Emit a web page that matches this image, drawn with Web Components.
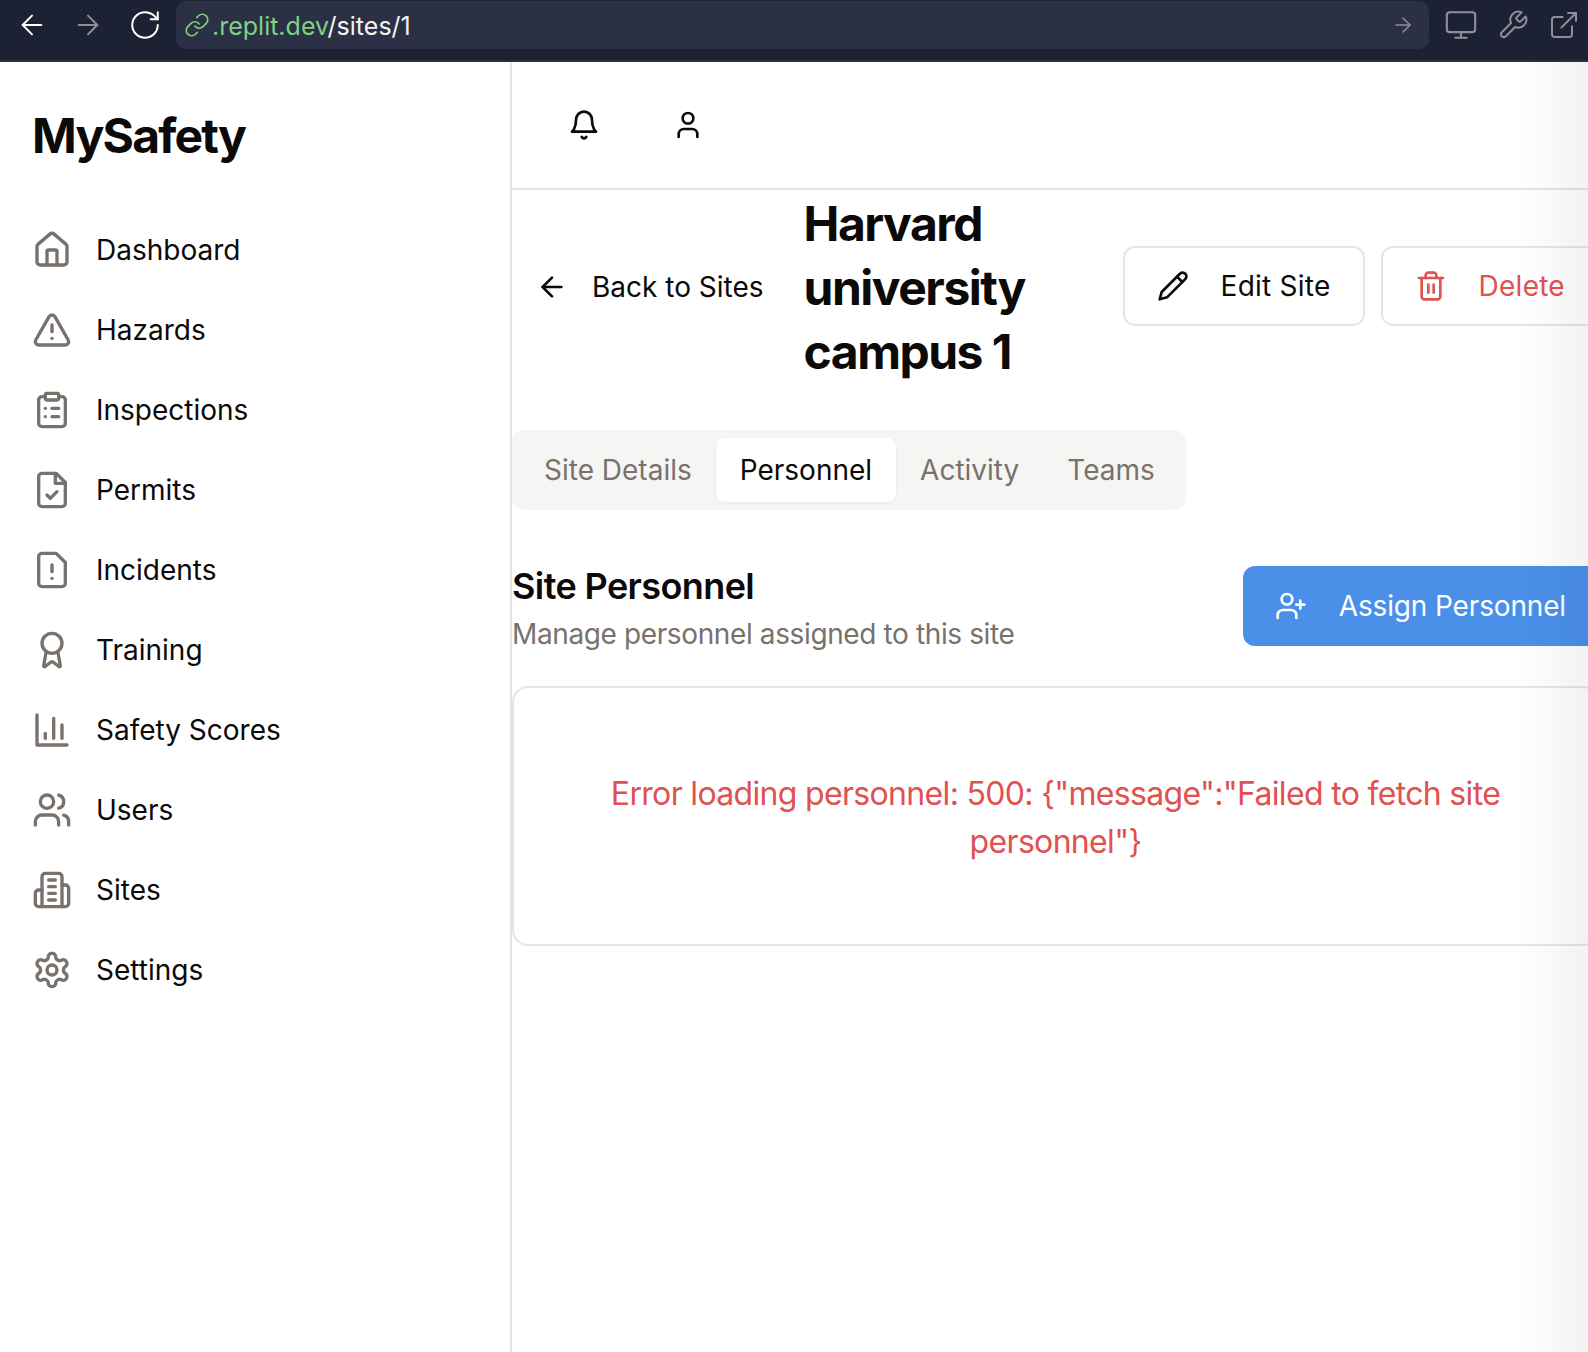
<!DOCTYPE html>
<html lang="en">
<head>
<meta charset="utf-8">
<title>MySafety</title>
<style>
  html, body { margin: 0; height: 1352px; overflow: hidden; background: #fff; }
  body { font-family: Inter, "Liberation Sans", sans-serif; color: #0c0a09; }
</style>
</head>
<body>
<app-shell>
  <browser-bar slot="bar" path="/sites/1" host-name=".replit.dev"></browser-bar>
  <side-nav slot="nav" brand="MySafety">
    <nav-item icon="home">Dashboard</nav-item>
    <nav-item icon="alert">Hazards</nav-item>
    <nav-item icon="clipboard">Inspections</nav-item>
    <nav-item icon="fileCheck">Permits</nav-item>
    <nav-item icon="fileWarn">Incidents</nav-item>
    <nav-item icon="award">Training</nav-item>
    <nav-item icon="chart">Safety Scores</nav-item>
    <nav-item icon="users">Users</nav-item>
    <nav-item icon="building">Sites</nav-item>
    <nav-item icon="settings">Settings</nav-item>
  </side-nav>
  <top-header slot="main"></top-header>
  <site-title slot="main" title-text="Harvard university campus 1"></site-title>
  <tab-list slot="main" active="Personnel" tabs="Site Details,Personnel,Activity,Teams"></tab-list>
  <section-head slot="main" heading="Site Personnel" sub="Manage personnel assigned to this site"></section-head>
  <error-card slot="main">Error loading personnel: 500: {"message":"Failed to fetch site personnel"}</error-card>
</app-shell>

<script>
const ICONS = {
  home: '<path d="M15 21v-8a1 1 0 0 0-1-1h-4a1 1 0 0 0-1 1v8"/><path d="M3 10a2 2 0 0 1 .709-1.528l7-5.999a2 2 0 0 1 2.582 0l7 5.999A2 2 0 0 1 21 10v9a2 2 0 0 1-2 2H5a2 2 0 0 1-2-2z"/>',
  alert: '<path d="m21.73 18-8-14a2 2 0 0 0-3.48 0l-8 14A2 2 0 0 0 4 21h16a2 2 0 0 0 1.73-3Z"/><path d="M12 9v4"/><path d="M12 17h.01"/>',
  clipboard: '<rect x="8" y="2" width="8" height="4" rx="1" ry="1"/><path d="M16 4h2a2 2 0 0 1 2 2v14a2 2 0 0 1-2 2H6a2 2 0 0 1-2-2V6a2 2 0 0 1 2-2h2"/><path d="M12 11h4"/><path d="M12 16h4"/><path d="M8 11h.01"/><path d="M8 16h.01"/>',
  fileCheck: '<path d="M14.5 2H6a2 2 0 0 0-2 2v16a2 2 0 0 0 2 2h12a2 2 0 0 0 2-2V7.5L14.5 2z"/><polyline points="14 2 14 8 20 8"/><path d="m9 15 2 2 4-4"/>',
  fileWarn: '<path d="M14.5 2H6a2 2 0 0 0-2 2v16a2 2 0 0 0 2 2h12a2 2 0 0 0 2-2V7.5L14.5 2z"/><path d="M12 9v4"/><path d="M12 17h.01"/>',
  award: '<path d="m15.477 12.89 1.515 8.526a.5.5 0 0 1-.81.47l-3.58-2.687a1 1 0 0 0-1.197 0l-3.586 2.686a.5.5 0 0 1-.81-.469l1.514-8.526"/><circle cx="12" cy="8" r="6"/>',
  chart: '<path d="M3 3v18h18"/><path d="M18 17V9"/><path d="M13 17V5"/><path d="M8 17v-3"/>',
  users: '<path d="M16 21v-2a4 4 0 0 0-4-4H6a4 4 0 0 0-4 4v2"/><circle cx="9" cy="7" r="4"/><path d="M22 21v-2a4 4 0 0 0-3-3.87"/><path d="M16 3.13a4 4 0 0 1 0 7.75"/>',
  building: '<path d="M6 22V4a2 2 0 0 1 2-2h8a2 2 0 0 1 2 2v18Z"/><path d="M6 12H4a2 2 0 0 0-2 2v6a2 2 0 0 0 2 2h2"/><path d="M18 9h2a2 2 0 0 1 2 2v9a2 2 0 0 1-2 2h-2"/><path d="M10 6h4"/><path d="M10 10h4"/><path d="M10 14h4"/><path d="M10 18h4"/>',
  settings: '<path d="M12.22 2h-.44a2 2 0 0 0-2 2v.18a2 2 0 0 1-1 1.73l-.43.25a2 2 0 0 1-2 0l-.15-.08a2 2 0 0 0-2.73.73l-.22.38a2 2 0 0 0 .73 2.73l.15.1a2 2 0 0 1 1 1.72v.51a2 2 0 0 1-1 1.74l-.15.09a2 2 0 0 0-.73 2.73l.22.38a2 2 0 0 0 2.73.73l.15-.08a2 2 0 0 1 2 0l.43.25a2 2 0 0 1 1 1.73V20a2 2 0 0 0 2 2h.44a2 2 0 0 0 2-2v-.18a2 2 0 0 1 1-1.73l.43-.25a2 2 0 0 1 2 0l.15.08a2 2 0 0 0 2.73-.73l.22-.39a2 2 0 0 0-.73-2.73l-.15-.08a2 2 0 0 1-1-1.74v-.5a2 2 0 0 1 1-1.74l.15-.09a2 2 0 0 0 .73-2.73l-.22-.38a2 2 0 0 0-2.73-.73l-.15.08a2 2 0 0 1-2 0l-.43-.25a2 2 0 0 1-1-1.73V4a2 2 0 0 0-2-2z"/><circle cx="12" cy="12" r="3"/>',
  bell: '<path d="M6 8a6 6 0 0 1 12 0c0 7 3 9 3 9H3s3-2 3-9"/><path d="M10.3 21a1.94 1.94 0 0 0 3.4 0"/>',
  user: '<path d="M19 21v-2a4 4 0 0 0-4-4H9a4 4 0 0 0-4 4v2"/><circle cx="12" cy="7" r="4"/>',
  arrowLeft: '<path d="m12 19-7-7 7-7"/><path d="M19 12H5"/>',
  arrowRight: '<path d="M5 12h14"/><path d="m12 5 7 7-7 7"/>',
  pencil: '<path d="M17 3a2.85 2.83 0 1 1 4 4L7.5 20.5 2 22l1.5-5.5Z"/><path d="m15 5 4 4"/>',
  trash: '<path d="M3 6h18"/><path d="M19 6v14c0 1-1 2-2 2H7c-1 0-2-1-2-2V6"/><path d="M8 6V4c0-1 1-2 2-2h4c1 0 2 1 2 2v2"/><path d="M10 11v6"/><path d="M14 11v6"/>',
  userPlus: '<path d="M16 21v-2a4 4 0 0 0-4-4H6a4 4 0 0 0-4 4v2"/><circle cx="9" cy="7" r="4"/><path d="M19 8v6"/><path d="M22 11h-6"/>',
  link: '<path d="M10 13a5 5 0 0 0 7.54.54l3-3a5 5 0 0 0-7.07-7.07l-1.72 1.71"/><path d="M14 11a5 5 0 0 0-7.54-.54l-3 3a5 5 0 0 0 7.07 7.07l1.71-1.71"/>',
  refresh: '<path d="M21 12a9 9 0 1 1-9-9c2.52 0 4.93 1 6.74 2.74L21 8"/><path d="M21 3v5h-5"/>',
  monitor: '<rect x="2" y="3" width="20" height="14" rx="2"/><path d="M8 21h8"/><path d="M12 17v4"/>',
  wrench: '<path d="M14.7 6.3a1 1 0 0 0 0 1.4l1.6 1.6a1 1 0 0 0 1.4 0l3.77-3.77a6 6 0 0 1-7.94 7.94l-6.91 6.91a2.12 2.12 0 0 1-3-3l6.91-6.91a6 6 0 0 1 7.94-7.94l-3.76 3.76z"/>',
  external: '<path d="M18 13v6a2 2 0 0 1-2 2H5a2 2 0 0 1-2-2V8a2 2 0 0 1 2-2h6"/><path d="M15 3h6v6"/><path d="M10 14 21 3"/>'
};

// small helper, every icon is a 24 unit lucide style stroke svg
function svg(name, size, color, stroke) {
  return `<svg xmlns="http://www.w3.org/2000/svg" width="${size}" height="${size}" viewBox="0 0 24 24" fill="none" stroke="${color}" stroke-width="${stroke || 2}" stroke-linecap="round" stroke-linejoin="round" style="display:block;flex:none">${ICONS[name]}</svg>`;
}

class AppShell extends HTMLElement {
  connectedCallback() {
    this.attachShadow({ mode: 'open' });
    this.shadowRoot.innerHTML = `
      <style>
        :host { display: flex; flex-direction: column; width: 1588px; height: 1352px; overflow: hidden; position: relative; background: #fff; }
        .body { display: flex; flex: 1; min-height: 0; }
        .main { width: 1087px; flex: none; display: flex; flex-direction: column; }
        .edge { position: absolute; top: 62px; right: 0; bottom: 0; width: 70px; pointer-events: none;
                background: linear-gradient(to right, rgba(0,0,0,0), rgba(0,0,0,.05)); }
      </style>
      <slot name="bar"></slot>
      <div class="body">
        <slot name="nav"></slot>
        <div class="main"><slot name="main"></slot></div>
      </div>
      <div class="edge"></div>
    `;
  }
}

class BrowserBar extends HTMLElement {
  connectedCallback() {
    this.attachShadow({ mode: 'open' });
    const grey = '#8d909b';
    this.shadowRoot.innerHTML = `
      <style>
        :host { display: flex; align-items: flex-start; height: 62px; box-sizing: border-box; background: #1c2133; border-bottom: 2px solid #2b2f42; flex: none; }
        .nav { display: flex; align-items: center; height: 50px; width: 176px; padding-left: 16px; box-sizing: border-box; gap: 24px; flex: none; }
        .url { width: 1253px; height: 48px; margin-top: 1px; background: #2b3044; border-radius: 10px; display: flex; align-items: center; padding: 0 14px 0 8px; box-sizing: border-box; flex: none; }
        .addr { font: 400 25px/48px Inter, "Liberation Sans", sans-serif; color: #f1f2f5; margin-left: 2px; padding-top: 2px; flex: 1; }
        .addr b { font-weight: 400; color: #7fd185; }
        .tools { display: flex; align-items: center; height: 50px; gap: 19px; padding-left: 15px; }
      </style>
      <div class="nav">
        ${svg('arrowLeft', 32, '#ffffff', 1.5)}
        ${svg('arrowRight', 32, grey, 1.5)}
        ${svg('refresh', 34, '#ffffff', 1.4)}
      </div>
      <div class="url">
        ${svg('link', 26, '#7fd185', 1.5)}
        <span class="addr"><b>${this.getAttribute('host-name')}</b>${this.getAttribute('path')}</span>
        ${svg('arrowRight', 24, grey, 1.5)}
      </div>
      <div class="tools">
        ${svg('monitor', 34, grey, 1.5)}
        ${svg('wrench', 32, grey, 1.5)}
        ${svg('external', 32, grey, 1.5)}
      </div>
    `;
  }
}

class SideNav extends HTMLElement {
  connectedCallback() {
    this.attachShadow({ mode: 'open' });
    this.shadowRoot.innerHTML = `
      <style>
        :host { display: block; width: 512px; flex: none; box-sizing: border-box; border-right: 2px solid #e7e5e4; }
        h1 { margin: 0; padding: 46px 0 0 32px; font: 700 48px/56px Inter, "Liberation Sans", sans-serif; letter-spacing: -1.8px; color: #0c0a09; }
        nav { display: flex; flex-direction: column; padding: 46px 0 0 32px; }
      </style>
      <h1>${this.getAttribute('brand')}</h1>
      <nav><slot></slot></nav>
    `;
  }
}

class NavItem extends HTMLElement {
  connectedCallback() {
    this.attachShadow({ mode: 'open' });
    this.shadowRoot.innerHTML = `
      <style>
        :host { display: flex; align-items: center; gap: 24px; height: 80px; font: 400 28px/40px Inter, "Liberation Sans", sans-serif; color: #0c0a09; }
      </style>
      ${svg(this.getAttribute('icon'), 40, '#78716c')}
      <span><slot></slot></span>
    `;
  }
}

class TopHeader extends HTMLElement {
  connectedCallback() {
    this.attachShadow({ mode: 'open' });
    this.shadowRoot.innerHTML = `
      <style>
        :host { display: flex; align-items: center; gap: 72px; height: 128px; box-sizing: border-box; border-bottom: 2px solid #e7e5e4; padding-left: 56px; flex: none; }
      </style>
      ${svg('bell', 32, '#0c0a09')}
      ${svg('user', 32, '#0c0a09')}
    `;
  }
}

class UiButton extends HTMLElement {
  connectedCallback() {
    this.attachShadow({ mode: 'open' });
    const kind = this.getAttribute('kind') || 'outline';
    const col = kind === 'danger' ? '#e05150' : kind === 'primary' ? '#ffffff' : '#0c0a09';
    this.shadowRoot.innerHTML = `
      <style>
        :host { display: inline-flex; align-items: center; gap: 32px; height: 80px; box-sizing: border-box; padding: 0 ${kind === 'primary' ? '33px' : '32px'} 0 32px; border-radius: 12px;
                font: 400 28px/40px Inter, "Liberation Sans", sans-serif; white-space: nowrap; flex: none; color: ${col};
                letter-spacing: ${kind === 'primary' ? '-0.15px' : '0.25px'};
                ${kind === 'primary' ? 'background:#4a90e9;' : 'background:#fff;border:2px solid #e7e5e4;'} }
      </style>
      ${svg(this.getAttribute('icon'), 32, col)}
      <slot></slot>
    `;
  }
}

class SiteTitle extends HTMLElement {
  connectedCallback() {
    this.attachShadow({ mode: 'open' });
    this.shadowRoot.innerHTML = `
      <style>
        :host { display: flex; align-items: center; gap: 16px; flex: none; padding-top: 2px; }
        .back { display: flex; align-items: center; gap: 24px; padding: 0 24px; margin-bottom: 3px; font: 400 28px/40px Inter, "Liberation Sans", sans-serif; color: #0c0a09; white-space: nowrap; flex: none; }
        h2 { margin: 0; width: 303px; flex: none; font: 700 48px/64px Inter, "Liberation Sans", sans-serif; letter-spacing: -1.5px; color: #0c0a09; }
        ui-button { margin-bottom: 4px; }
      </style>
      <div class="back">${svg('arrowLeft', 32, '#0c0a09')}<span>Back to Sites</span></div>
      <h2>${this.getAttribute('title-text')}</h2>
      <ui-button icon="pencil">Edit Site</ui-button>
      <ui-button icon="trash" kind="danger">Delete</ui-button>
    `;
  }
}

class TabList extends HTMLElement {
  connectedCallback() {
    this.attachShadow({ mode: 'open' });
    const active = this.getAttribute('active');
    const items = this.getAttribute('tabs').split(',').map(t =>
      `<div class="tab${t === active ? ' on' : ''}">${t}</div>`).join('');
    this.shadowRoot.innerHTML = `
      <style>
        :host { display: flex; align-self: flex-start; height: 80px; box-sizing: border-box; padding: 8px; margin-top: 46px; background: #f5f5f4; border-radius: 12px; }
        .tab { display: flex; align-items: center; height: 64px; padding: 0 24px; border-radius: 8px; font: 400 28px/40px Inter, "Liberation Sans", sans-serif; color: #78716c; white-space: nowrap; }
        .tab:first-child { padding-right: 26px; }
        .tab:last-child { padding-right: 23px; }
        .on { background: #fff; color: #0c0a09; box-shadow: 0 1px 3px rgba(0,0,0,.06); }
      </style>
      ${items}
    `;
  }
}

class SectionHead extends HTMLElement {
  connectedCallback() {
    this.attachShadow({ mode: 'open' });
    this.shadowRoot.innerHTML = `
      <style>
        :host { display: flex; justify-content: space-between; align-items: flex-start; margin-top: 56px; flex: none; }
        h3 { margin: 0; font: 600 36px/40px Inter, "Liberation Sans", sans-serif; letter-spacing: -0.6px; color: #0c0a09; }
        p { margin: 8px 0 0; font: 400 28px/40px Inter, "Liberation Sans", sans-serif; letter-spacing: -0.38px; color: #78716c; }
      </style>
      <div><h3>${this.getAttribute('heading')}</h3><p>${this.getAttribute('sub')}</p></div>
      <ui-button icon="userPlus" kind="primary">Assign Personnel</ui-button>
    `;
  }
}

class ErrorCard extends HTMLElement {
  connectedCallback() {
    this.attachShadow({ mode: 'open' });
    this.shadowRoot.innerHTML = `
      <style>
        :host { display: block; margin-top: 32px; box-sizing: border-box; height: 260px; border: 2px solid #e7e5e4; border-radius: 16px; padding: 82px 48px 0; text-align: center;
                font: 400 32px/48px Inter, "Liberation Sans", sans-serif; letter-spacing: -0.67px; color: #e05150; }
      </style>
      <slot></slot>
    `;
  }
}

customElements.define('app-shell', AppShell);
customElements.define('browser-bar', BrowserBar);
customElements.define('side-nav', SideNav);
customElements.define('nav-item', NavItem);
customElements.define('top-header', TopHeader);
customElements.define('ui-button', UiButton);
customElements.define('site-title', SiteTitle);
customElements.define('tab-list', TabList);
customElements.define('section-head', SectionHead);
customElements.define('error-card', ErrorCard);
</script>
</body>
</html>
